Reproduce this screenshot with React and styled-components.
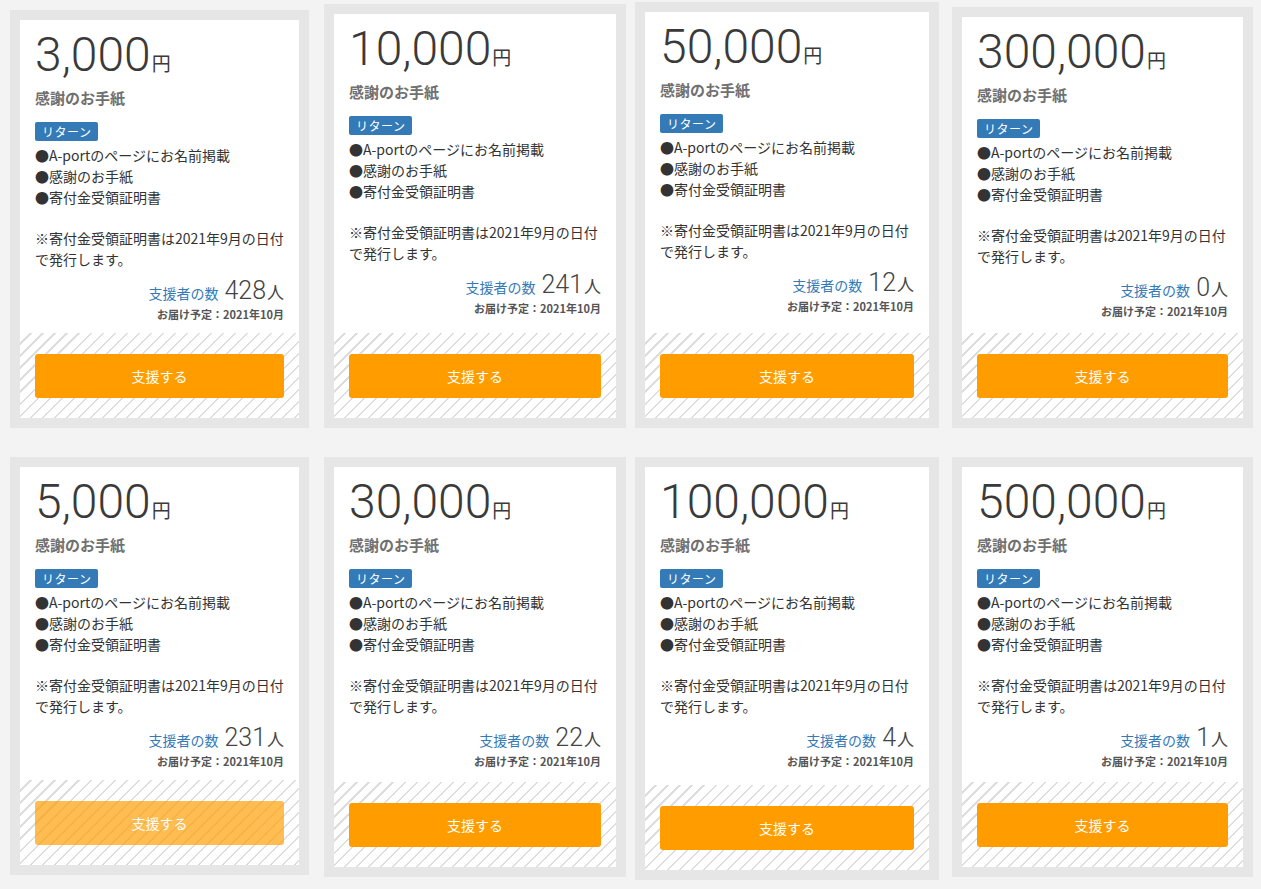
import styled, { createGlobalStyle } from "styled-components";

const GlobalStyle = createGlobalStyle`
  html, body {
    margin: 0;
    padding: 0;
    background: #f3f3f3;
  }
  body {
    font-family: "Noto Sans CJK JP", "Noto Sans", sans-serif;
    color: #333;
  }
`;

const Page = styled.div`
  padding: 2px 0 0 10px;
  width: 1261px;
  height: 889px;
  box-sizing: border-box;
  overflow: hidden;
`;

const Row = styled.div`
  display: grid;
  grid-template-columns: 314px 311px 317px 301px;
  align-items: ${({ $align }) => $align};
  height: 426px;
  margin-bottom: 29px;
`;

const Card = styled.div`
  box-sizing: border-box;
  width: ${({ $w }) => $w}px;
  height: ${({ $h }) => $h}px;
  background: #fff;
  border: 10px solid #e6e6e6;
  display: flex;
  flex-direction: column;
`;

const Body = styled.div`
  padding: 8px 15px 10px;
`;

const Price = styled.div`
  font-family: Roboto, "Noto Sans", sans-serif;
  font-weight: 300;
  font-size: 48px;
  line-height: 53px;
  height: 53px;
  color: #3a3a3a;
  white-space: nowrap;
`;

const Yen = styled.span`
  font-family: "Noto Sans CJK JP", sans-serif;
  font-weight: 400;
  font-size: 19px;
  line-height: 1;
  margin-left: 1px;
`;

const Title = styled.div`
  margin-top: 6px;
  font-size: 15px;
  line-height: 22px;
  font-weight: 700;
  color: #707070;
`;

const Badge = styled.span`
  display: inline-block;
  margin-top: 13px;
  padding: 0 7px;
  height: 19px;
  line-height: 19px;
  font-size: 12px;
  color: #fff;
  background: #337ab7;
  border-radius: 2px;
  letter-spacing: 0.5px;
  vertical-align: top;
`;

const Text = styled.div`
  margin-top: 4px;
  font-size: 14px;
  line-height: 20.8px;
  color: #333;
  white-space: nowrap;
`;

const Supporters = styled.div`
  margin-top: 6px;
  height: 30px;
  display: flex;
  justify-content: flex-end;
  align-items: baseline;
  line-height: 30px;
  color: #444;
`;

const SupLabel = styled.span`
  font-size: 14px;
  color: #337ab7;
  margin-right: 6px;
`;

const Count = styled.span`
  font-family: Roboto, "Noto Sans", sans-serif;
  font-weight: 300;
  font-size: 25px;
`;

const Person = styled.span`
  font-size: 17px;
  margin-left: 1px;
`;

const Delivery = styled.div`
  text-align: right;
  font-size: 11px;
  line-height: 16px;
  font-weight: 700;
  color: #555;
`;

const Footer = styled.div`
  margin-top: auto;
  padding: 21px 15px 20px;
  background: repeating-linear-gradient(
    135deg,
    #fff 0,
    #fff 7px,
    #dddddd 7px,
    #dddddd 8.5px
  );
`;

const Button = styled.button`
  display: block;
  width: 100%;
  height: 44px;
  border: none;
  border-radius: 3px;
  background: #ff9d00;
  color: #fff;
  font-family: "Noto Sans CJK JP", sans-serif;
  font-size: 14px;
  font-weight: 400;
  opacity: ${({ $faded }) => ($faded ? 0.68 : 1)};
  cursor: pointer;
`;

const rows = [
  {
    align: "end",
    cards: [
      { price: "3,000", count: 428, w: 299, h: 418 },
      { price: "10,000", count: 241, w: 302, h: 424 },
      { price: "50,000", count: 12, w: 304, h: 426 },
      { price: "300,000", count: 0, w: 301, h: 421 },
    ],
  },
  {
    align: "start",
    cards: [
      { price: "5,000", count: 231, w: 299, h: 418, faded: true },
      { price: "30,000", count: 22, w: 302, h: 420 },
      { price: "100,000", count: 4, w: 304, h: 423 },
      { price: "500,000", count: 1, w: 301, h: 420 },
    ],
  },
];

function RewardCard({ price, count, w, h, faded }) {
  return (
    <Card $w={w} $h={h}>
      <Body>
        <Price>
          {price}
          <Yen>円</Yen>
        </Price>
        <Title>感謝のお手紙</Title>
        <Badge>リターン</Badge>
        <Text>
          ●A-portのページにお名前掲載
          <br />
          ●感謝のお手紙
          <br />
          ●寄付金受領証明書
          <br />
          <br />
          ※寄付金受領証明書は2021年9月の日付
          <br />
          で発行します。
        </Text>
        <Supporters>
          <SupLabel>支援者の数</SupLabel>
          <Count>{count}</Count>
          <Person>人</Person>
        </Supporters>
        <Delivery>お届け予定：2021年10月</Delivery>
      </Body>
      <Footer>
        <Button $faded={faded}>支援する</Button>
      </Footer>
    </Card>
  );
}

export default function App() {
  return (
    <>
      <GlobalStyle />
      <Page>
        {rows.map((row, i) => (
          <Row key={i} $align={row.align}>
            {row.cards.map((c) => (
              <RewardCard key={c.price} {...c} />
            ))}
          </Row>
        ))}
      </Page>
    </>
  );
}
